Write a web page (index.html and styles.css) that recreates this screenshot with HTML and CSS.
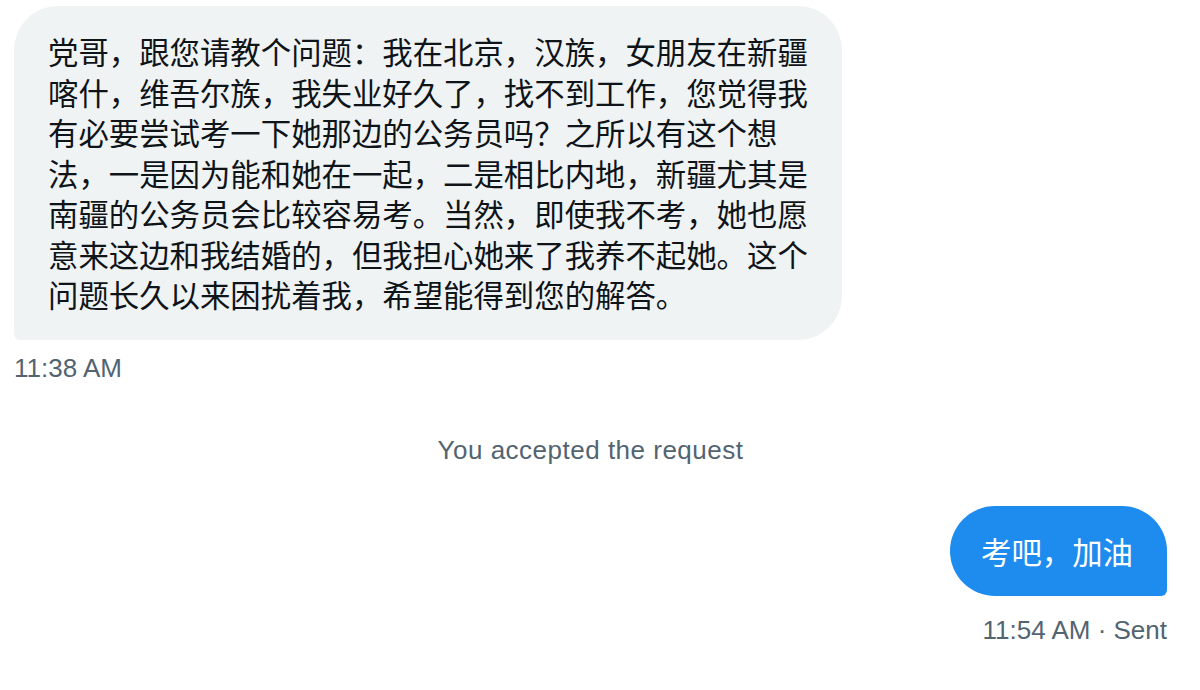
FILE: index.html
```html
<!DOCTYPE html>
<html lang="zh-CN">
<head>
<meta charset="utf-8">
<link rel="stylesheet" href="styles.css">
</head>
<body>
<div class="thread">
  <div class="msg msg-in">
    <div class="bubble bubble-in">党哥，跟您请教个问题：我在北京，汉族，女朋友在新疆<br>喀什，维吾尔族，我失业好久了，找不到工作，您觉得我<br>有必要尝试考一下她那边的公务员吗？之所以有这个想<br>法，一是因为能和她在一起，二是相比内地，新疆尤其是<br>南疆的公务员会比较容易考。当然，即使我不考，她也愿<br>意来这边和我结婚的，但我担心她来了我养不起她。这个<br>问题长久以来困扰着我，希望能得到您的解答。</div>
    <div class="meta">11:38 AM</div>
  </div>
  <div class="notice">You accepted the request</div>
  <div class="msg msg-out">
    <div class="bubble bubble-out">考吧，加油</div>
    <div class="meta">11:54 AM · Sent</div>
  </div>
</div>
</body>
</html>
```
FILE: styles.css
```css
html, body {
  margin: 0;
  padding: 0;
  background: #ffffff;
}
body {
  font-family: "Liberation Sans", "Noto Sans CJK SC", sans-serif;
  color: #0f1419;
}
.thread {
  width: 1200px;
  height: 690px;
  box-sizing: border-box;
  padding: 6px 33px 0 14px;
  display: flex;
  flex-direction: column;
}
.msg {
  display: flex;
  flex-direction: column;
}
.msg-in {
  align-items: flex-start;
}
.msg-out {
  align-items: flex-end;
  margin-top: 40px;
}
.bubble {
  font-family: "Noto Sans CJK SC", sans-serif;
  font-size: 30.4px;
  line-height: 40.5px;
  white-space: nowrap;
}
.bubble-in {
  background: #eff3f4;
  color: #0f1419;
  width: 760px;
  padding: 25px 34px;
  border-radius: 44px 44px 44px 6px;
}
.bubble-out {
  background: #1e8cee;
  color: #ffffff;
  padding: 25px 34px 25px 31px;
  border-radius: 45px 45px 6px 45px;
}
.meta {
  font-size: 26px;
  line-height: 32px;
  color: #536471;
}
.msg-in .meta {
  margin-top: 12px;
}
.msg-out .meta {
  margin-top: 18px;
}
.notice {
  margin-top: 50px;
  text-align: center;
  font-size: 26px;
  line-height: 32px;
  letter-spacing: 0.5px;
  color: #536471;
}
```
